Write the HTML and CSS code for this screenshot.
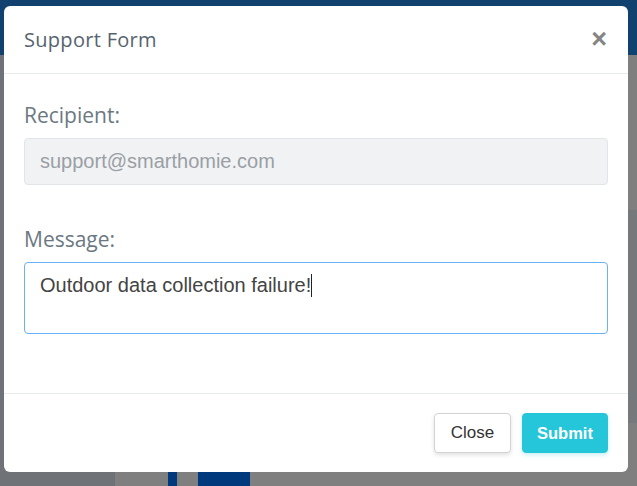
FILE: index.html
```html
<!DOCTYPE html>
<html>
<head>
<meta charset="utf-8">
<link rel="stylesheet" href="styles.css">
</head>
<body>
<div class="backdrop">
  <div class="topbar"></div>
  <div class="page">
    <div class="sidebar"></div>
    <div class="main">
      <div class="strip"></div>
      <div class="bars"><span class="bar thin"></span><span class="bar wide"></span></div>
    </div>
  </div>
</div>
<div class="modal">
  <div class="modal-header">
    <h5 class="modal-title">Support Form</h5>
    <span class="close-x">&times;</span>
  </div>
  <div class="modal-body">
    <div class="group">
      <label class="label">Recipient:</label>
      <div class="input readonly">support@smarthomie.com</div>
    </div>
    <div class="group">
      <label class="label">Message:</label>
      <div class="input textarea">Outdoor data collection failure!<span class="caret"></span></div>
    </div>
  </div>
  <div class="modal-footer">
    <button class="btn btn-light">Close</button>
    <button class="btn btn-info">Submit</button>
  </div>
</div>
</body>
</html>
```
FILE: styles.css
```css
html, body {
  margin: 0;
  padding: 0;
  width: 637px;
  height: 486px;
  overflow: hidden;
  background: #7f7f7f;
  font-family: "Liberation Sans", Arial, sans-serif;
}
.backdrop {
  width: 637px;
  height: 486px;
  display: flex;
  flex-direction: column;
}
.topbar {
  height: 55px;
  background: #10416f;
}
.page {
  flex: 1;
  display: flex;
}
.sidebar {
  width: 115px;
  background: #6f7377;
}
.main {
  flex: 1;
  position: relative;
  background: #7f7f7f;
}
.strip {
  position: absolute;
  right: 0;
  top: 155px;
  width: 12px;
  height: 213px;
  background: #76797c;
}
.bars {
  position: absolute;
  left: 53px;
  top: 410px;
  display: flex;
  gap: 21px;
}
.bar {
  height: 30px;
  background: #003a7c;
}
.bar.thin { width: 9px; }
.bar.wide { width: 52px; }

.modal {
  position: absolute;
  left: 4px;
  top: 6px;
  width: 624px;
  height: 466px;
  background: #fff;
  border-radius: 6px;
  display: flex;
  flex-direction: column;
}
.modal-header {
  height: 68px;
  box-sizing: border-box;
  border-bottom: 1px solid #e9ecef;
  display: flex;
  align-items: center;
  justify-content: space-between;
  padding: 0 20px;
}
.modal-title {
  margin: 0;
  font-family: "Open Sans", sans-serif;
  font-weight: 400;
  font-size: 20px;
  color: #56646e;
  letter-spacing: 0.3px;
}
.close-x {
  font-family: "Liberation Sans", Arial, sans-serif;
  font-weight: 700;
  font-size: 27px;
  line-height: 1;
  color: #858585;
  margin-right: 1px;
}
.modal-body {
  flex: 1;
  padding: 27px 20px 0;
}
.group {
  margin-bottom: 40px;
}
.label {
  display: block;
  font-family: "Open Sans", sans-serif;
  font-size: 21px;
  line-height: 28px;
  color: #6b7882;
  margin-bottom: 9px;
}
.input {
  box-sizing: border-box;
  width: 584px;
  border: 1px solid #e2e5e8;
  border-radius: 4px;
  padding: 0 15px;
}
.input.readonly {
  height: 47px;
  line-height: 45px;
  font-size: 20px;
  background: #f1f2f4;
  color: #9a9fa4;
}
.input.textarea {
  height: 72px;
  border-color: #66b2f3;
  color: #444;
  padding-top: 9px;
  font-size: 20px;
  line-height: 26px;
}
.caret {
  display: inline-block;
  width: 1px;
  height: 23px;
  background: #222;
  vertical-align: -5px;
}
.modal-footer {
  height: 79px;
  box-sizing: border-box;
  border-top: 1px solid #e9ecef;
  display: flex;
  justify-content: flex-end;
  align-items: center;
  gap: 11px;
  padding: 0 20px;
}
.btn {
  height: 40px;
  border-radius: 4px;
  font-family: "Liberation Sans", Arial, sans-serif;
  font-size: 17px;
  padding: 0;
  cursor: pointer;
}
.btn-light {
  width: 77px;
  background: #fff;
  border: 1px solid #d3d3d3;
  color: #333;
  box-shadow: 0 2px 4px rgba(0,0,0,0.12);
}
.btn-info {
  width: 86px;
  background: #26c6da;
  border: 1px solid #26c6da;
  color: #fff;
  font-weight: 700;
  font-size: 16.5px;
  box-shadow: 0 2px 4px rgba(38,198,218,0.25);
}
```
